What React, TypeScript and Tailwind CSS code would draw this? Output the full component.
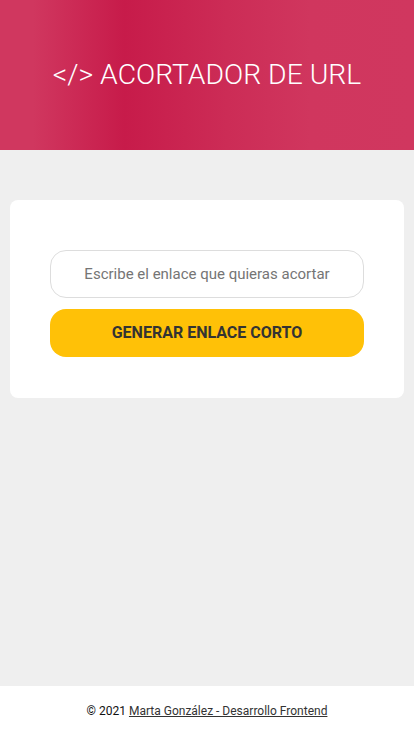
export default function App() {
  return (
    <div className="flex min-h-screen flex-col bg-[#efefef] font-['Roboto',sans-serif]">
      <header className="flex h-[150px] items-center justify-center bg-[linear-gradient(90deg,#d0375f_0%,#d0375f_8%,#c71b4a_30%,#cc2c56_55%,#d0365e_75%,#d0375f_100%)]">
        <h1 className="text-[28.3px] font-light text-white">&lt;/&gt; ACORTADOR DE URL</h1>
      </header>

      <main className="flex-1 px-[10px] pt-[50px]">
        <div className="rounded-lg bg-white px-10 pb-[41px] pt-[50px]">
          <input
            type="text"
            placeholder="Escribe el enlace que quieras acortar"
            className="block h-12 w-full rounded-2xl border border-[#dddddd] bg-white px-4 text-center text-[15px] text-[#333] placeholder:text-[#757575] outline-none"
          />
          <button className="mt-[11px] block h-12 w-full rounded-2xl bg-[#ffc107] text-base font-bold text-[#333]">
            GENERAR ENLACE CORTO
          </button>
        </div>
      </main>

      <footer className="flex h-[50px] items-center justify-center bg-white text-xs text-[#111]">
        <p>
          © 2021{" "}
          <a href="#" className="text-[#333] underline">
            Marta González - Desarrollo Frontend
          </a>
        </p>
      </footer>
    </div>
  )
}
